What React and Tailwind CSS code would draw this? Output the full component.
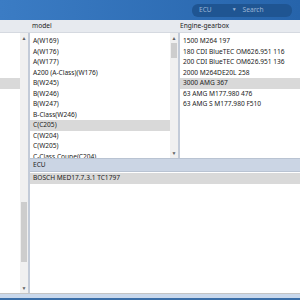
import { useState } from "react";

const models = [
  "A(W169)",
  "A(W176)",
  "A(W177)",
  "A200 (A-Class)(W176)",
  "B(W245)",
  "B(W246)",
  "B(W247)",
  "B-Class(W246)",
  "C(C205)",
  "C(W204)",
  "C(W205)",
  "C-Class Coupe(C204)",
];

const engines = [
  "1500 M264 197",
  "180 CDI BlueTEC OM626.951 116",
  "200 CDI BlueTEC OM626.951 136",
  "2000 M264DE20L 258",
  "3000 AMG 367",
  "63 AMG M177.980 476",
  "63 AMG S M177.980 F510",
];

function Row({ text, active }) {
  return (
    <div
      className={`flex h-[10.5px] shrink-0 items-center whitespace-nowrap pl-[3px] ${
        active ? "bg-[#d9d9d9]" : ""
      }`}
    >
      {text}
    </div>
  );
}

function Scrollbar({ thumbTop, thumbHeight }) {
  return (
    <div className="flex w-[8px] shrink-0 flex-col items-center bg-[#f0f0f0] text-[5px] text-[#606060]">
      <div className="flex h-[10px] items-center leading-none">▲</div>
      <div className="relative w-full flex-1">
        <div
          className="absolute left-[1px] right-[1px] bg-[#cdcdcd]"
          style={{ top: thumbTop, height: thumbHeight }}
        />
      </div>
      <div className="flex h-[10px] items-center leading-none">▼</div>
    </div>
  );
}

export default function App() {
  const [model] = useState(8);
  const [engine] = useState(4);

  return (
    <div
      className="flex h-[300px] w-[300px] flex-col overflow-hidden bg-white text-[6.6px] text-[#222]"
      style={{ fontFamily: '"Noto Sans", "Open Sans", sans-serif' }}
    >
      {/* title bar */}
      <div className="flex h-[20px] shrink-0 items-center justify-end bg-gradient-to-r from-[#3b7cc4] to-[#2664ab] pr-[8px]">
        <div className="flex h-[13px] w-[100px] items-center gap-[6px] rounded-[6px] bg-[#1f5592] pl-[7px] text-[6.6px] text-[#9db6d6]">
          <span>ECU</span>
          <span className="ml-[14px] text-[5px]">▼</span>
          <span>Search</span>
        </div>
      </div>

      {/* column headers */}
      <div className="flex h-[13px] shrink-0 items-center border-b border-[#d5d9e0] bg-[#e7eaef]">
        <div className="w-[32px] shrink-0" />
        <div className="w-[148px] shrink-0">model</div>
        <div className="flex-1">Engine-gearbox</div>
      </div>

      <div className="flex min-h-0 flex-1">
        {/* left column */}
        <div className="flex w-[30px] shrink-0 border-r-2 border-[#c3cbd8]">
          <div className="flex w-[20px] flex-col pt-[3px]">
            {Array.from({ length: 12 }).map((_, i) => (
              <Row key={i} text="" active={i === 4} />
            ))}
          </div>
          <Scrollbar thumbTop={159} thumbHeight={60} />
        </div>

        <div className="flex min-w-0 flex-1 flex-col">
          <div className="flex h-[125px] shrink-0">
            <div className="flex w-[140px] shrink-0 flex-col overflow-hidden pt-[3px]">
              {models.map((m, i) => (
                <Row key={m} text={m} active={i === model} />
              ))}
            </div>
            <Scrollbar thumbTop={0} thumbHeight={15} />
            <div className="flex flex-1 flex-col overflow-hidden border-l-2 border-[#c3cbd8] pt-[3px]">
              {engines.map((e, i) => (
                <Row key={e} text={e} active={i === engine} />
              ))}
            </div>
          </div>

          <div className="flex h-[14px] shrink-0 items-center border-y border-[#b9c3d2] bg-[#cbd5e4] pl-[3px]">
            ECU
          </div>
          <div className="flex flex-1 flex-col pt-[1px]">
            <Row text="BOSCH MED17.7.3.1 TC1797" active />
          </div>
        </div>
      </div>

      {/* status strip */}
      <div className="h-[1px] shrink-0 bg-[#c4c4c4]" />
      <div className="h-[4px] shrink-0 bg-[#c9d8ec]" />
      <div className="h-[2px] shrink-0 bg-[#3a6ea8]" />
    </div>
  );
}
